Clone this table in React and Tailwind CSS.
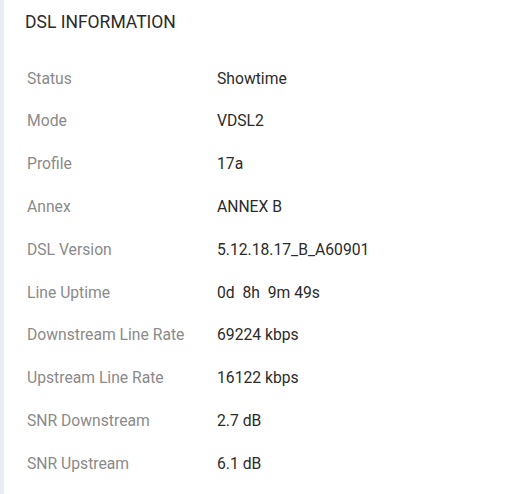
const rows = [
  ["Status", "Showtime"],
  ["Mode", "VDSL2"],
  ["Profile", "17a"],
  ["Annex", "ANNEX B"],
  ["DSL Version", "5.12.18.17_B_A60901"],
  ["Line Uptime", "0d\u00a0 8h\u00a0 9m 49s"],
  ["Downstream Line Rate", "69224 kbps"],
  ["Upstream Line Rate", "16122 kbps"],
  ["SNR Downstream", "2.7 dB"],
  ["SNR Upstream", "6.1 dB"],
];

export default function App() {
  return (
    <div className="flex h-[494px] w-[514px] bg-white font-['Roboto',sans-serif]">
      <div className="w-[4px] shrink-0 bg-[#e9edf2]" />
      <div className="flex-1">
        <h1 className="pl-[21px] pt-[12px] text-[17.5px] leading-[20px] text-[#2b2b2b]">
          DSL INFORMATION
        </h1>
        <div className="mt-[25px]">
          {rows.map(([label, value]) => (
            <div key={label} className="flex h-[42.8px] items-center text-[15.7px]">
              <span className="w-[190px] pl-[23px] text-[#8a8a8a]">{label}</span>
              <span className="pl-[23px] text-[#2b2b2b]">{value}</span>
            </div>
          ))}
        </div>
      </div>
    </div>
  );
}
